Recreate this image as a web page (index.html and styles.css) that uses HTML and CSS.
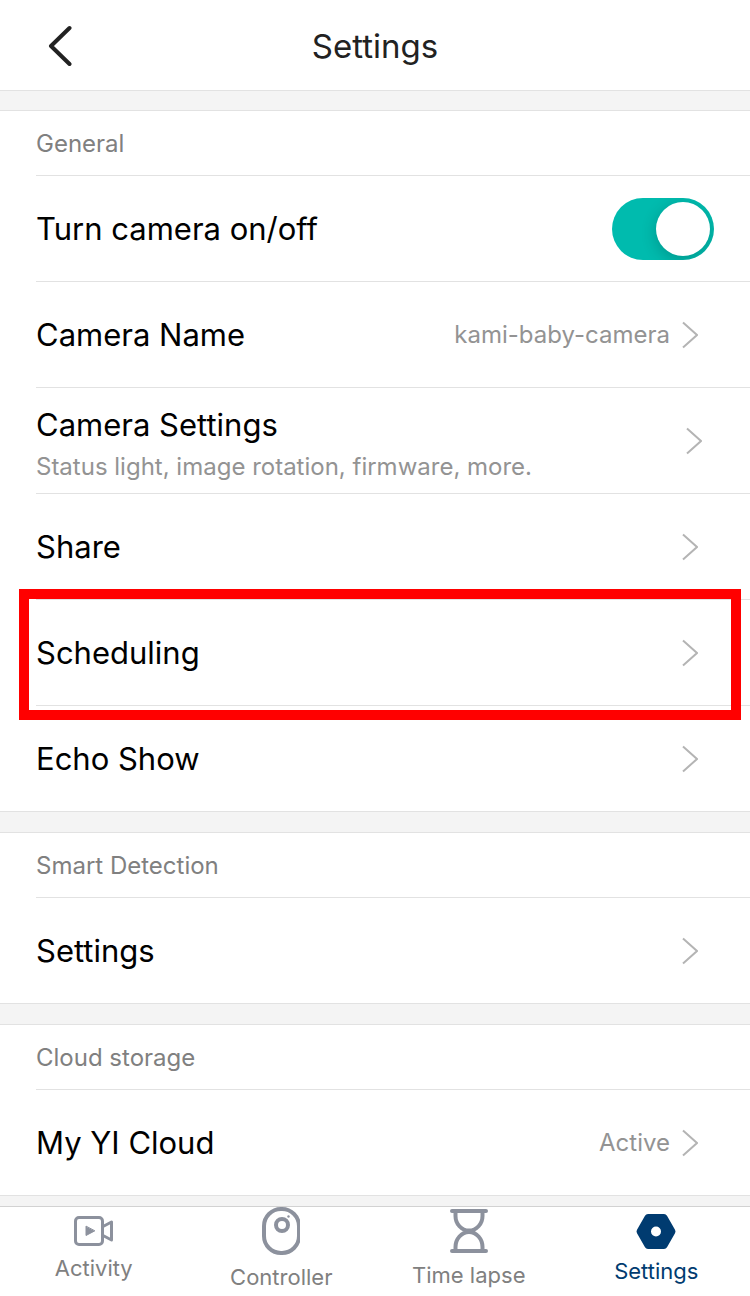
FILE: index.html
```html
<!DOCTYPE html>
<html lang="en">
<head>
    <meta charset="UTF-8">
    <meta name="viewport" content="width=device-width, initial-scale=1.0">
    <title>Settings</title>
    <link rel="stylesheet" href="styles.css">
</head>
<body>
    <header class="navbar">
        <a class="back" href="#" aria-label="Back">
            <svg width="24" height="42" viewBox="0 0 24 42"><path d="M21.500 3 3 21l18.500 18"/></svg>
        </a>
        <h1>Settings</h1>
    </header>

    <main>
        <section>
            <h2>General</h2>
            <ul>
                <li class="row">
                    <label for="cameraPower">Turn camera on/off</label>
                    <input type="checkbox" id="cameraPower" class="switch" checked>
                </li>
                <li>
                    <a class="row link" href="#">
                        <span>Camera Name</span>
                        <span class="value">kami-baby-camera</span>
                        <svg class="chevron" viewBox="0 0 16 28"><path d="M1 1.500 15 14 1 26.500"/></svg>
                    </a>
                </li>
                <li>
                    <a class="row link detailed" href="#">
                        <span>Camera Settings
                            <small>Status light, image rotation, firmware, more.</small>
                        </span>
                        <svg class="chevron" viewBox="0 0 16 28"><path d="M1 1.500 15 14 1 26.500"/></svg>
                    </a>
                </li>
                <li>
                    <a class="row link" href="#">
                        <span>Share</span>
                        <svg class="chevron" viewBox="0 0 16 28"><path d="M1 1.500 15 14 1 26.500"/></svg>
                    </a>
                </li>
                <li class="highlight">
                    <a class="row link" href="#">
                        <span>Scheduling</span>
                        <svg class="chevron" viewBox="0 0 16 28"><path d="M1 1.500 15 14 1 26.500"/></svg>
                    </a>
                </li>
                <li>
                    <a class="row link" href="#">
                        <span>Echo Show</span>
                        <svg class="chevron" viewBox="0 0 16 28"><path d="M1 1.500 15 14 1 26.500"/></svg>
                    </a>
                </li>
            </ul>
        </section>

        <section>
            <h2>Smart Detection</h2>
            <ul>
                <li>
                    <a class="row link" href="#">
                        <span>Settings</span>
                        <svg class="chevron" viewBox="0 0 16 28"><path d="M1 1.500 15 14 1 26.500"/></svg>
                    </a>
                </li>
            </ul>
        </section>

        <section>
            <h2>Cloud storage</h2>
            <ul>
                <li>
                    <a class="row link" href="#">
                        <span>My YI Cloud</span>
                        <span class="value">Active</span>
                        <svg class="chevron" viewBox="0 0 16 28"><path d="M1 1.500 15 14 1 26.500"/></svg>
                    </a>
                </li>
            </ul>
        </section>
    </main>

    <nav class="tabbar">
        <a href="#">
            <svg width="40" height="30" viewBox="0 0 40 30">
                <rect x="1.500" y="1.500" width="27" height="27" rx="3.500"/>
                <path d="M29 10.500 37.500 6v18L29 19.500"/>
                <path class="solid" d="M12 10.500v9l8.500-4.500z"/>
            </svg>
            Activity
        </a>
        <a href="#">
            <svg class="bold" width="38" height="48" viewBox="0 0 38 48">
                <rect x="2" y="2" width="35" height="44" rx="17"/>
                <circle cx="20" cy="18" r="6"/>
                <circle class="dot" cx="26.500" cy="9.500" r="1.200"/>
            </svg>
            Controller
        </a>
        <a href="#">
            <svg class="bold" width="38" height="44" viewBox="0 0 38 44">
                <path d="M2 2h34M2 42h34M5.500 2v5c0 8 6 14.500 13.500 14.500S32.500 15 32.500 7V2M5.500 42v-4C5.500 30 11.500 23 19 23s13.500 7 13.500 15v4"/>
            </svg>
            Time lapse
        </a>
        <a class="active" href="#">
            <svg width="40" height="35" viewBox="0 0 40 35">
                <path fill-rule="evenodd" d="M12 0h16q2 0 3 1.700l8 14q1 1.800 0 3.600l-8 14Q30 35 28 35H12q-2 0-3-1.700l-8-14q-1-1.800 0-3.600l8-14Q10 0 12 0zM20 12.500a5 5 0 1 0 0 10 5 5 0 0 0 0-10z"/>
            </svg>
            Settings
        </a>
    </nav>
</body>
</html>
```

FILE: styles.css
```css
* {
    box-sizing: border-box;
}

body {
    display: flex;
    flex-direction: column;
    min-height: 100vh;
    margin: 0;
    font-family: Inter, "Liberation Sans", sans-serif;
    background-color: #f4f4f4;
    color: #000;
}

a {
    color: inherit;
    text-decoration: none;
}

svg {
    flex: none;
    fill: none;
    stroke: currentColor;
}

/* top bar */
.navbar {
    display: grid;
    grid-template-columns: 1fr auto 1fr;
    align-items: center;
    height: 91px;
    padding: 2px 48px 0;
    background-color: #fff;
    border-bottom: 1px solid #e2e2e2;
    color: #222;
}

.back svg {
    display: block;
    stroke-width: 4;
    stroke-linecap: round;
    stroke-linejoin: round;
}

h1 {
    margin: 0;
    font-size: 33px;
    font-weight: 400;
}

/* settings groups */
main {
    flex: 1;
    display: flex;
    flex-direction: column;
    gap: 20px;
    padding: 19px 0 10px;
}

section {
    padding-left: 36px;
    background-color: #fff;
    border-top: 1px solid #e2e2e2;
    border-bottom: 1px solid #e2e2e2;
}

h2 {
    margin: 0;
    padding-top: 2px;
    font-size: 24px;
    font-weight: 400;
    line-height: 62px;
    color: #808080;
}

ul {
    margin: 0;
    padding: 0;
    list-style: none;
}

li {
    border-top: 1px solid #e2e2e2;
}

.row {
    display: flex;
    align-items: center;
    justify-content: space-between;
    min-height: 105px;
    padding-right: 36px;
    font-size: 31px;
    line-height: 40px;
}

.link {
    padding-right: 52px;
}

li.row {
    min-height: 106px;
}

.detailed {
    padding-right: 48px;
}

.detailed span {
    padding-top: 12px;
}

small {
    display: block;
    font-size: 24px;
    line-height: 44px;
    color: #939393;
}

.value {
    margin-left: auto;
    margin-right: 12px;
    font-size: 24px;
    color: #939393;
}

.chevron {
    width: 16px;
    height: 28px;
    color: #b4b4b4;
    stroke-width: 2;
}

.switch {
    appearance: none;
    display: flex;
    width: 102px;
    height: 62px;
    margin: 0;
    padding: 4px;
    border-radius: 31px;
    background-color: #ccc;
    overflow: hidden;
    cursor: pointer;
}

.switch::before {
    content: "";
    width: 54px;
    height: 54px;
    border-radius: 50%;
    background-color: #fff;
    box-shadow: 0 4px 16px rgba(0, 0, 0, 0.2);
}

.switch:checked {
    justify-content: flex-end;
    background-color: #00bbae;
}

/* red frame round the row to tap */
.highlight {
    position: relative;
}

.highlight::after {
    content: "";
    position: absolute;
    top: -11px;
    right: 9px;
    bottom: -15px;
    left: -17px;
    border: 10px solid #f00;
    pointer-events: none;
}

/* bottom tabs */
.tabbar {
    display: grid;
    grid-template-columns: repeat(4, 1fr);
    height: 90px;
    background-color: #fff;
    border-top: 1px solid #d2d2d2;
}

.tabbar a {
    display: flex;
    flex-direction: column;
    align-items: center;
    justify-content: center;
    gap: 6px;
    padding-bottom: 4px;
    font-size: 22px;
    line-height: 32px;
    color: #808080;
}

.tabbar svg {
    color: #8c919d;
    stroke-width: 3;
    stroke-linecap: round;
    stroke-linejoin: round;
}

.tabbar .bold {
    stroke-width: 4;
}

.tabbar .solid {
    fill: currentColor;
    stroke-width: 1;
}

.tabbar .dot {
    fill: currentColor;
    stroke: none;
}

.tabbar .active,
.tabbar .active svg {
    color: #003b70;
}

.tabbar .active svg {
    fill: currentColor;
    stroke: none;
}
```
